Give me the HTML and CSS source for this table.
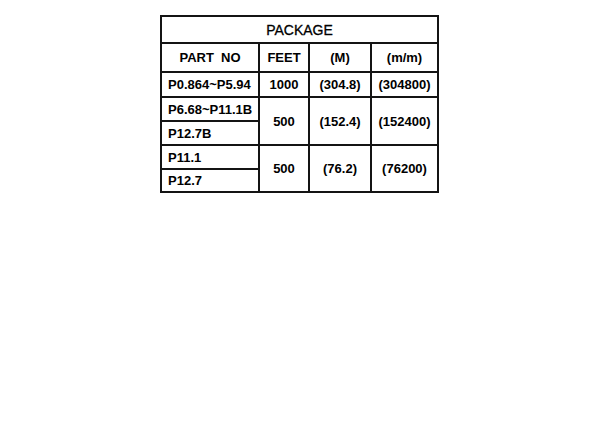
FILE: index.html
```html
<!DOCTYPE html>
<html>
<head>
<meta charset="utf-8">
<link rel="stylesheet" href="styles.css">
</head>
<body>
<table class="pkg">
  <colgroup>
    <col class="c1"><col class="c2"><col class="c3"><col class="c4">
  </colgroup>
  <tr class="r-title"><td colspan="4" class="title">PACKAGE</td></tr>
  <tr class="r-head">
    <td class="center">PART&nbsp;&nbsp;NO</td>
    <td class="center">FEET</td>
    <td class="center">(M)</td>
    <td class="center">(m/m)</td>
  </tr>
  <tr class="r-a">
    <td class="part">P0.864~P5.94</td>
    <td class="center">1000</td>
    <td class="center">(304.8)</td>
    <td class="center">(304800)</td>
  </tr>
  <tr class="r-b">
    <td class="part">P6.68~P11.1B</td>
    <td class="center" rowspan="2">500</td>
    <td class="center" rowspan="2">(152.4)</td>
    <td class="center" rowspan="2">(152400)</td>
  </tr>
  <tr class="r-b"><td class="part">P12.7B</td></tr>
  <tr class="r-b">
    <td class="part">P11.1</td>
    <td class="center" rowspan="2">500</td>
    <td class="center" rowspan="2">(76.2)</td>
    <td class="center" rowspan="2">(76200)</td>
  </tr>
  <tr class="r-c"><td class="part">P12.7</td></tr>
</table>
</body>
</html>
```
FILE: styles.css
```css
html, body {
  margin: 0;
  padding: 0;
  background: #ffffff;
}
body {
  padding: 15px 0 0 160px;
  font-family: "Liberation Sans", Arial, sans-serif;
  color: #000;
}
.pkg {
  border-collapse: collapse;
  table-layout: fixed;
  width: 277px;
}
.c1 { width: 98px; }
.c2 { width: 50px; }
.c3 { width: 62px; }
.c4 { width: 67px; }
.pkg td {
  border: 2px solid #141414;
  padding: 0;
  font-size: 13px;
  font-weight: bold;
  line-height: 1;
  white-space: nowrap;
}
.pkg td.title {
  text-align: center;
  font-size: 14px;
  font-weight: normal;
  -webkit-text-stroke: 0.3px #000;
}
.center { text-align: center; }
.part { text-align: left; padding-left: 6px !important; }
.r-title { height: 27px; }
.r-head { height: 29px; }
.r-a { height: 25px; }
.r-b { height: 24px; }
.r-c { height: 23px; }
```
